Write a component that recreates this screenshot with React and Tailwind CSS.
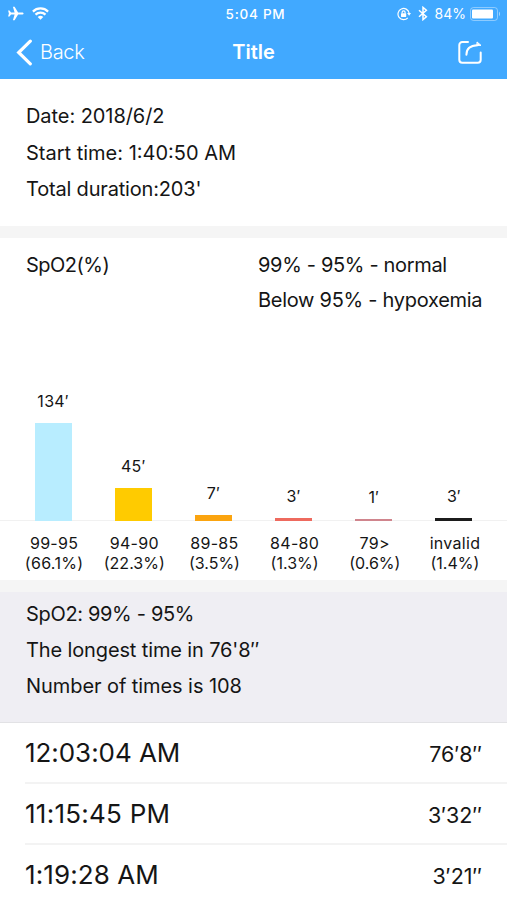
const ranges = [
  { label: "99-95", percent: "66.1%", value: "134′", height: 98, color: "bg-[#b8edff]", percentSpacing: "tracking-[0.3px]" },
  { label: "94-90", percent: "22.3%", value: "45′", height: 33, color: "bg-[#ffcb00]", percentSpacing: "tracking-normal" },
  { label: "89-85", percent: "3.5%", value: "7′", height: 6, color: "bg-[#fba40f]", percentSpacing: "tracking-normal" },
  { label: "84-80", percent: "1.3%", value: "3′", height: 3, color: "bg-[#ee6a5e]", percentSpacing: "tracking-normal" },
  { label: "79>", percent: "0.6%", value: "1′", height: 2, color: "bg-[#d0858d]", percentSpacing: "tracking-normal" },
  { label: "invalid", percent: "1.4%", value: "3′", height: 3, color: "bg-[#1c1c1c]", percentSpacing: "tracking-normal" },
];

const records = [
  { time: "12:03:04 AM", duration: "76′8″", spacing: "tracking-[-0.05px]" },
  { time: "11:15:45 PM", duration: "3′32″", spacing: "tracking-[0.25px]" },
  { time: "1:19:28 AM", duration: "3′21″", spacing: "tracking-[0.1px]" },
];

const PlaneIcon = () => (
  <svg width="16" height="15" viewBox="0 0 16 15" fill="#fff">
    <path d="M15.6 7.500c0-.7-.7-1.100-1.600-1.100h-3.900L6.600.7H4.900l1.700 5.700H3L1.500 4.400H.1l.8 3.100-.8 3.100h1.400L3 8.600h3.600l-1.700 5.700h1.700l3.500-5.700H14c.9 0 1.600-.4 1.600-1.100z" />
  </svg>
);

const WifiIcon = () => (
  <svg width="17" height="13" viewBox="0 0 17 13" fill="none" stroke="#fff" strokeWidth="2.200">
    <path d="M.9 4.600a10.800 10.800 0 0 1 15.200 0" />
    <path d="M3.500 7.600a7.100 7.100 0 0 1 10 0" />
    <path d="M8.500 12.800 5.700 10a4 4 0 0 1 5.600 0z" fill="#fff" stroke="none" />
  </svg>
);

const RotationLockIcon = () => (
  <svg width="14" height="14" viewBox="0 0 14 14" fill="none" stroke="#fff" strokeWidth="1.2">
    <path d="M10.800 10.800A5.600 5.600 0 1 1 12.100 6" />
    <path d="M10.100 6.100h3.900l-1.900 2.600z" fill="#fff" stroke="none" />
    <path d="M5.100 6.500V5.400a1.500 1.500 0 0 1 3 0v1.100" />
    <rect x="4" y="6.300" width="5.200" height="3.700" rx=".4" fill="#fff" stroke="none" />
  </svg>
);

const BluetoothIcon = () => (
  <svg width="10" height="15" viewBox="0 0 10 15" fill="none" stroke="#fff" strokeWidth="1.500">
    <path d="m1 4.200 7.400 6.500L5 13.600V1.400l3.400 2.900L1 10.800" />
  </svg>
);

const BatteryIcon = () => (
  <svg width="31" height="14" viewBox="0 0 31 14" fill="none">
    <rect x=".5" y=".5" width="27" height="13" rx="3" stroke="#fff" strokeOpacity=".4" />
    <rect x="2" y="2.500" width="21" height="9" rx="1" fill="#fff" />
    <path d="M29 4.800v4.400c1.400-.4 1.400-4 0-4.400z" fill="#fff" fillOpacity=".5" />
  </svg>
);

const ShareIcon = () => (
  <svg width="25" height="25" viewBox="0 0 25 25" fill="none" stroke="#fff" strokeWidth="2" strokeLinecap="round" strokeLinejoin="round">
    <path d="M10 2H4.300a3 3 0 0 0-3 3v14.800a3 3 0 0 0 3 3h15.400a3 3 0 0 0 3-3V12.500" />
    <path d="M8.400 14.800C8.400 8.600 12 5.400 19.500 5.200" />
    <path d="m19.300 2.200 3.700 3.200h-3.700z" fill="#fff" strokeWidth="1" />
  </svg>
);

const Header = () => (
  <header className="h-[79px] bg-[#41a9ff] text-white">
    <div className="grid h-[27px] grid-cols-[1fr_auto_1fr] items-center pl-[8px] pr-[6px]">
      <div className="flex items-center gap-2">
        <PlaneIcon />
        <WifiIcon />
      </div>
      <p className="pt-px pl-[2px] text-[13.500px] leading-[26px] font-medium tracking-[0.75px]">5:04 PM</p>
      <div className="flex items-center justify-end">
        <RotationLockIcon />
        <span className="ml-[7px]"><BluetoothIcon /></span>
        <span className="ml-[7px] mr-[4px] pt-px text-[14px] leading-[26px]">84%</span>
        <BatteryIcon />
      </div>
    </div>
    <div className="grid h-[50px] grid-cols-[1fr_auto_1fr] items-center pl-4 pr-[24px]">
      <button className="flex items-center gap-[7px] text-[20px] font-light tracking-[-0.3px]">
        <svg width="17" height="27" viewBox="0 0 17 27" fill="none" stroke="#fff" strokeWidth="3.200" strokeLinecap="round">
          <path d="M14.300 2.200 2.700 13.500l11.600 11.300" />
        </svg>
        Back
      </button>
      <h1 className="pl-[8px] text-[20px] font-semibold">Title</h1>
      <button className="justify-self-end">
        <ShareIcon />
      </button>
    </div>
  </header>
);

const RangeChart = () => (
  <div>
    <div className="flex h-[190px] items-end border-b border-[#f1f1f1] px-[13px]">
      {ranges.map((range) => (
        <div key={range.label} className="-mb-px flex flex-1 flex-col items-center">
          <span className="text-[16px] leading-5 tracking-[0.3px]">{range.value}</span>
          <div className={`mt-3 w-[37px] ${range.color}`} style={{ height: range.height }} />
        </div>
      ))}
    </div>
    <div className="flex pr-3 pl-[14px] pt-3">
      {ranges.map((range) => (
        <div key={range.label} className="flex-1 text-center text-[16px] leading-[20px]">
          <p className="tracking-[0.3px]">{range.label}</p>
          <p className={range.percentSpacing}>({range.percent})</p>
        </div>
      ))}
    </div>
  </div>
);

export default function App() {
  return (
    <main className="h-[900px] w-[507px] overflow-hidden bg-white font-['Inter',sans-serif] text-[#151515]">
      <Header />

      <section className="h-[147px] pt-[19px] pl-[26px] text-[20px] leading-[36.500px]">
        <p className="tracking-[-0.07px]">Date: 2018/6/2</p>
        <p>Start time: 1:40:50 AM</p>
        <p className="tracking-[-0.18px]">Total duration:203'</p>
      </section>

      <div className="h-3 bg-[#f5f5f5]" />

      <section className="h-[342px]">
        <div className="flex h-[93px] pt-[10px] pl-[26px] text-[20px] leading-[35px]">
          <p className="w-[232px] tracking-[-0.5px]">SpO2(%)</p>
          <div>
            <p className="tracking-[-0.33px]">99% - 95% - normal</p>
            <p className="tracking-[-0.28px]">Below 95% - hypoxemia</p>
          </div>
        </div>
        <RangeChart />
      </section>

      <div className="h-3 bg-[#f5f5f5]" />

      <section className="h-[131px] border-b border-[#e2e2e5] bg-[#efeef3] pt-1 pl-[26px] text-[20px] leading-9">
        <p className="tracking-[-0.33px]">SpO2: 99% - 95%</p>
        <p className="tracking-[-0.13px]">The longest time in 76'8″</p>
        <p className="tracking-[-0.07px]">Number of times is 108</p>
      </section>

      <ul className="pl-[25px]">
        {records.map((record) => (
          <li key={record.time} className="flex h-[61px] items-center justify-between border-b-2 border-[#f3f3f3] pr-[25px]">
            <span className={`text-[26px] ${record.spacing}`}>{record.time}</span>
            <span className="pt-[3px] text-[21.500px]">{record.duration}</span>
          </li>
        ))}
      </ul>
    </main>
  );
}
